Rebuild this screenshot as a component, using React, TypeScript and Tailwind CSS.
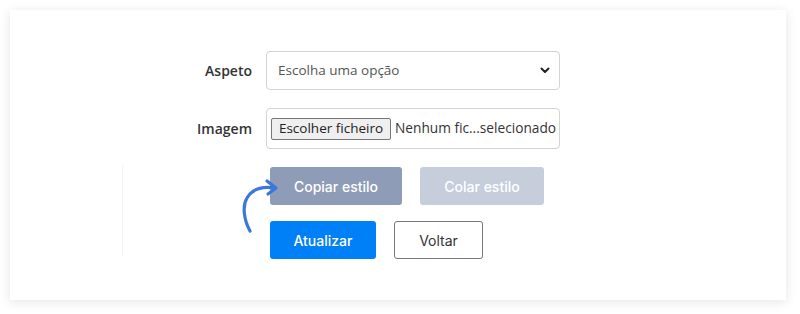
import React from 'react';

const OPEN = { fontFamily: '"Open Sans", "Noto Sans", sans-serif' };
const BTN = { fontFamily: 'Inter, "Noto Sans", sans-serif' };

function Chevron() {
  return (
    <svg width="10" height="7" viewBox="0 0 10 7" fill="none">
      <path d="M1.5 1.5 L5 5 L8.5 1.5" stroke="#222" strokeWidth="2" strokeLinecap="round" strokeLinejoin="round" />
    </svg>
  );
}

function Arrow() {
  return (
    <svg width="50" height="60" viewBox="0 0 50 60" fill="none">
      <path d="M17 55 C 11 44, 9 30, 14 22 C 19 13, 28 10, 42 12" stroke="#3b78dc" strokeWidth="3.2" strokeLinecap="round" fill="none" />
      <path d="M34 5 L43 12 L35 18" stroke="#3b78dc" strokeWidth="3.2" strokeLinecap="round" strokeLinejoin="round" fill="none" />
    </svg>
  );
}

export default function App() {
  return (
    <div className="h-[314px] w-[800px] bg-white pl-[10px] pt-[10px]">
      <div className="relative h-[290px] w-[776px] bg-white shadow-[0_2px_10px_rgba(60,70,90,0.14)]">
        <div className="pt-[41px]">
          {/* form rows */}
          <div className="grid grid-cols-[242px_294px] items-center gap-x-[14px] gap-y-[18px]">
            <label className="text-right text-[14px] font-semibold text-[#333]" style={OPEN}>Aspeto</label>
            <div className="relative h-[39px] rounded-[4px] border border-[#d4d4d4] bg-white">
              <select
                className="h-full w-full appearance-none bg-transparent pl-[11px] text-[13.5px] text-[#555] outline-none"
                style={OPEN}
                defaultValue=""
              >
                <option value="">Escolha uma opção</option>
              </select>
              <div className="pointer-events-none absolute right-[9px] top-[15px]">
                <Chevron />
              </div>
            </div>

            <label className="text-right text-[14px] font-semibold text-[#333]" style={OPEN}>Imagem</label>
            <div className="flex h-[41px] items-center overflow-hidden rounded-[4px] border border-[#d4d4d4] bg-white pl-[4px]" style={OPEN}>
              <span className="flex h-[22px] w-[120px] shrink-0 items-center justify-center whitespace-nowrap rounded-[2px] border border-[#767676] bg-[#efefef] text-[13.5px] text-[#222]">
                Escolher ficheiro
              </span>
              <span className="ml-[4px] whitespace-nowrap text-[13.7px] text-[#333]">Nenhum fic...selecionado</span>
            </div>
          </div>

          {/* buttons */}
          <div className="mt-[18px] flex">
            <div className="w-[112px]" />
            <div className="mt-[-2px] h-[92px] border-l border-[#f4f4f4]" />
            <div className="relative ml-[147px] flex flex-col gap-[16px]" style={BTN}>
              <div className="pointer-events-none absolute left-[-37px] top-[9px]">
                <Arrow />
              </div>
              <div className="flex gap-[18px]">
                <button className="h-[38px] w-[132px] rounded-[3px] bg-[#8e9cb7] text-[14px] font-medium text-white">Copiar estilo</button>
                <button className="h-[38px] w-[124px] rounded-[3px] bg-[#c6cedc] text-[14px] font-medium text-white">Colar estilo</button>
              </div>
              <div className="flex gap-[18px]">
                <button className="h-[38px] w-[106px] rounded-[3px] bg-[#0080f6] text-[14px] font-medium text-white">Atualizar</button>
                <button className="h-[38px] w-[89px] rounded-[3px] border border-[#777] bg-white text-[14px] text-[#333]">Voltar</button>
              </div>
            </div>
          </div>
        </div>
      </div>
    </div>
  );
}
